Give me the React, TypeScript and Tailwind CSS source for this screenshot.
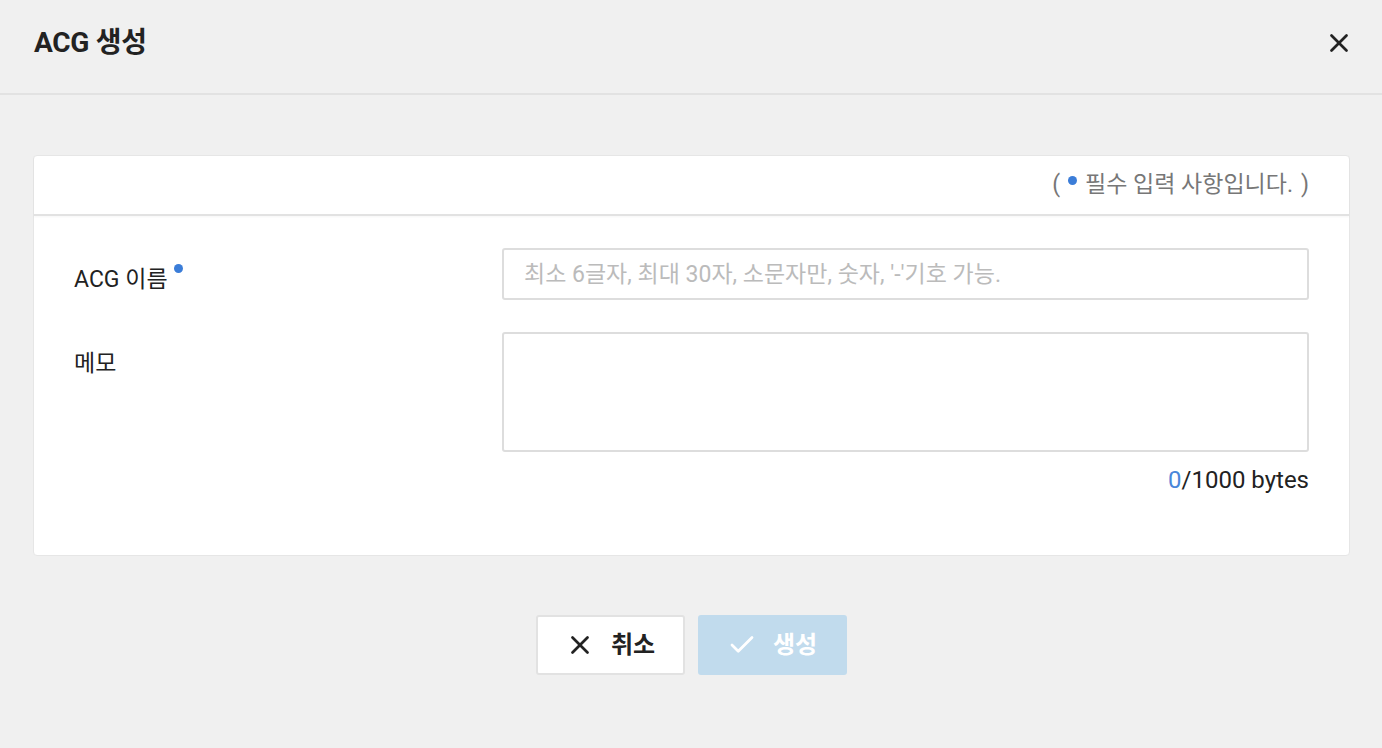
import { X, Check } from 'lucide-react'

const FONT = { fontFamily: 'Roboto, "Noto Sans CJK KR", sans-serif' }

function Dot() {
  return <span className="block w-[9px] h-[9px] rounded-full bg-[#3b7dd8]" />
}

export default function App() {
  return (
    <div className="w-[1382px] h-[748px] bg-[#f0f0f0] flex flex-col text-[#222]" style={FONT}>
      {/* header */}
      <div className="h-[95px] flex items-center justify-between pl-[34px] pr-[28px] border-b-2 border-[#e2e2e2] shrink-0">
        <h1 className="text-[28px] font-bold tracking-[-0.3px] -mt-[8px]">ACG 생성</h1>
        <X className="w-[30px] h-[30px] -mt-[8px] text-[#222]" strokeWidth={2.2} />
      </div>

      {/* body */}
      <div className="pl-[33px] pr-[32px] pt-[60px]">
        <div className="bg-white rounded-[4px] border border-[#e6e6e6]">
          <div className="h-[60px] flex items-center justify-end pr-[40px] border-b-2 border-[#e2e2e2] shadow-[0_1px_2px_rgba(0,0,0,0.04)]">
            <span className="text-[23px] text-[#777] flex items-center gap-[8px]">
              <span>(</span>
              <span className="-mt-[10px]"><Dot /></span>
              <span>필수 입력 사항입니다.</span>
              <span>)</span>
            </span>
          </div>

          <div className="pl-[40px] pr-[40px] pt-[32px] pb-[61px] flex flex-col gap-[32px]">
            <div className="flex items-center">
              <label className="w-[428px] text-[23px] flex items-start gap-[6px] pt-[12px]">
                <span>ACG 이름</span>
                <span className="pt-[1px]"><Dot /></span>
              </label>
              <input
                className="flex-1 h-[52px] border-2 border-[#ddd] rounded-[3px] px-[20px] text-[23px] outline-none placeholder:text-[#bbb]"
                placeholder="최소 6글자, 최대 30자, 소문자만, 숫자, '-'기호 가능."
              />
            </div>

            <div className="flex items-start">
              <label className="w-[428px] text-[23px] pt-[15px]">메모</label>
              <div className="flex-1 flex flex-col gap-[14px]">
                <textarea className="h-[120px] border-2 border-[#ddd] rounded-[3px] resize-none outline-none" />
                <div className="text-right text-[24px] leading-[28px]">
                  <span className="text-[#4a87d9]">0</span>/1000 bytes
                </div>
              </div>
            </div>
          </div>
        </div>
      </div>

      {/* footer */}
      <div className="flex justify-center gap-[13px] pt-[59px]">
        <button className="w-[149px] h-[60px] bg-white border-2 border-[#e2e2e2] rounded-[3px] flex items-center justify-center gap-[16px] text-[24px] font-bold text-[#222]">
          <X className="w-[30px] h-[30px]" strokeWidth={2.2} />
          <span>취소</span>
        </button>
        <button className="w-[149px] h-[60px] bg-[#c1dbed] rounded-[3px] flex items-center justify-center gap-[16px] text-[24px] font-bold text-white">
          <Check className="w-[30px] h-[30px]" strokeWidth={2.2} />
          <span>생성</span>
        </button>
      </div>
    </div>
  )
}
